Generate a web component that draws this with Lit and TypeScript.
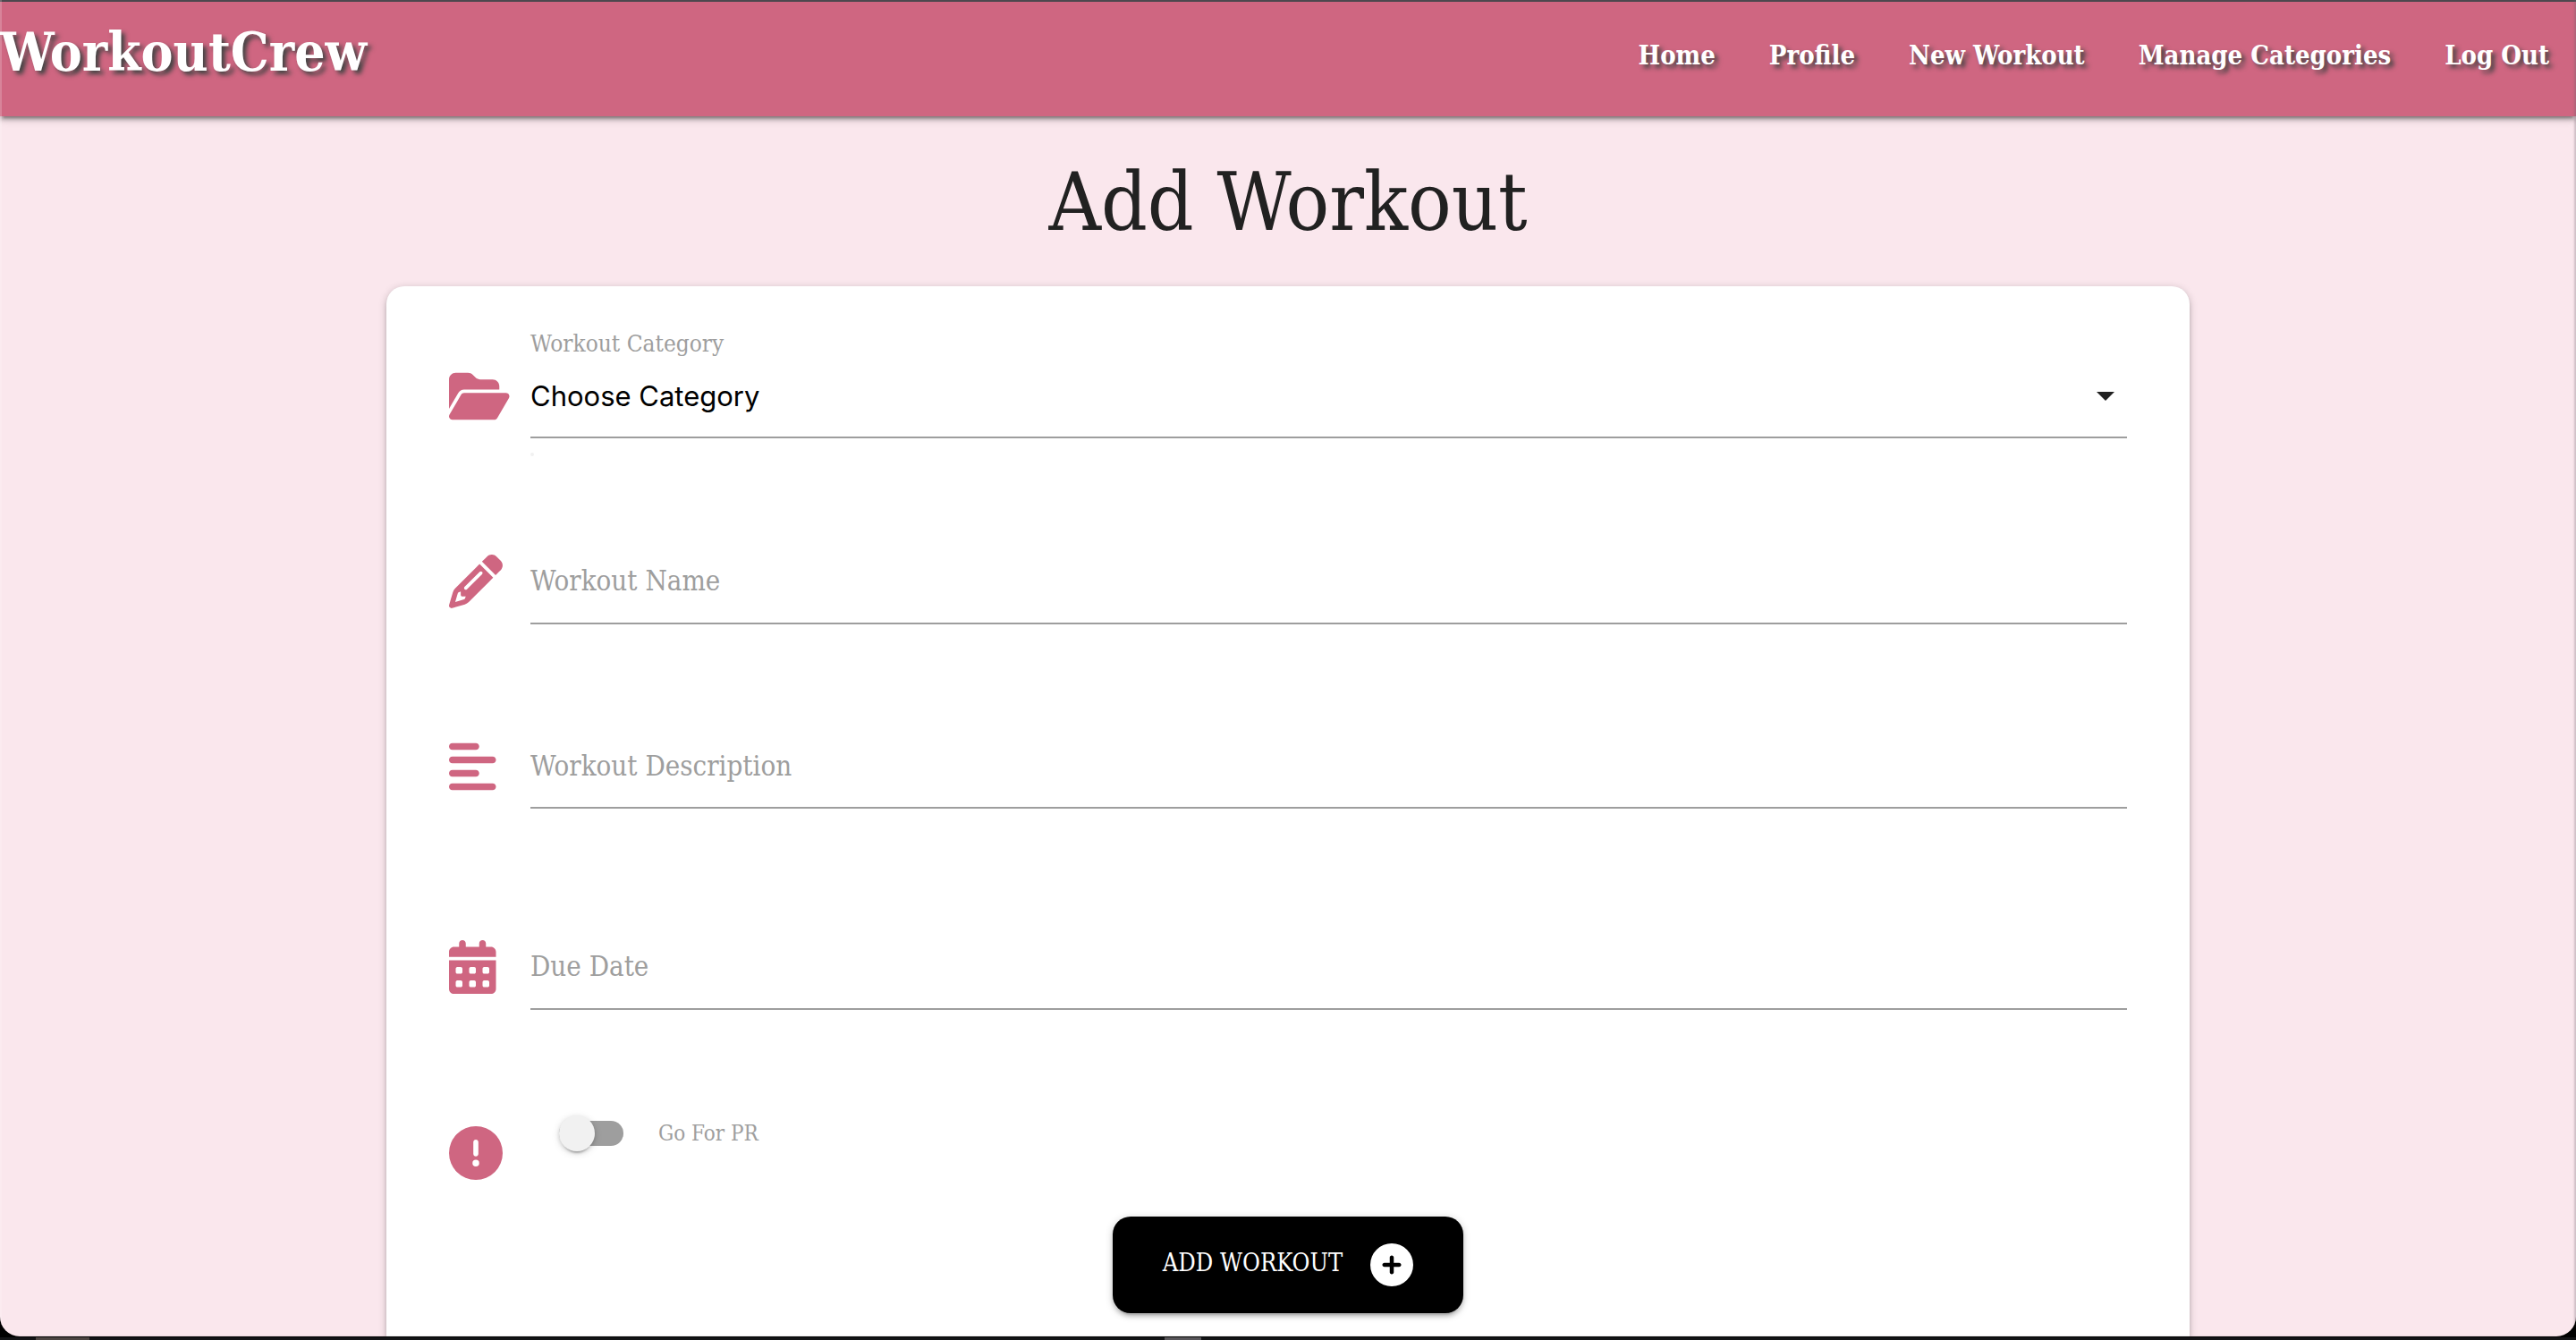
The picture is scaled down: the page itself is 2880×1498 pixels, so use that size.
import { LitElement, html, css, svg } from "lit";
import { customElement, property, state } from "lit/decorators.js";

const dot = (x: number, y: number) =>
  `M${x} ${y + 16}v32c0 8.8 7.2 16 16 16h32c8.8 0 16-7.2 16-16v-32c0-8.8-7.2-16-16-16h-32c-8.8 0-16 7.2-16 16z`;

const ICONS: Record<string, { width: number; path: string }> = {
  folder: {
    width: 576,
    path: "M88.7 223.8L0 375.8V96C0 60.7 28.7 32 64 32H181.5c17 0 33.3 6.7 45.3 18.7l26.5 26.5c12 12 28.3 18.7 45.3 18.7H416c35.3 0 64 28.7 64 64v32H144c-22.8 0-43.8 12.1-55.3 31.8zm27.6 16.1C122.1 230 132.6 224 144 224H544c11.5 0 22 6.1 27.7 16.1s5.7 22.2-.1 32.1l-112 192C453.9 474 443.4 480 432 480H32c-11.5 0-22-6.1-27.7-16.1s-5.7-22.2 .1-32.1l112-192z",
  },
  pencil: {
    width: 512,
    path: "M410.3 231l11.3-11.3-33.9-33.9-62.1-62.1L291.7 89.8l-11.3 11.3-22.6 22.6L58.6 322.9c-10.4 10.4-18 23.3-22.2 37.4L1 480.7c-2.5 8.4-.2 17.5 6.1 23.7s15.3 8.5 23.7 6.1l120.3-35.4c14.1-4.2 27-11.8 37.4-22.2L387.7 253.7 410.3 231zM160 399.4l-9.1 22.7c-4 3.1-8.5 5.4-13.3 6.9L59.4 452l23-78.1c1.4-4.9 3.8-9.4 6.9-13.3l22.7-9.1v32c0 8.8 7.2 16 16 16h32zM362.7 18.7L348.3 33.2 325.7 55.8 314.3 67.1l33.9 33.9 62.1 62.1 33.9 33.9 11.3-11.3 22.6-22.6 14.5-14.5c25-25 25-65.5 0-90.5L453.3 18.7c-25-25-65.5-25-90.5 0zm-47.4 168l-144 144c-6.2 6.2-16.4 6.2-22.6 0s-6.2-16.4 0-22.6l144-144c6.2-6.2 16.4-6.2 22.6 0s6.2 16.4 0 22.6z",
  },
  lines: {
    width: 448,
    path: "M288 64c0 17.7-14.3 32-32 32H32C14.3 96 0 81.7 0 64S14.3 32 32 32H256c17.7 0 32 14.3 32 32zm0 256c0 17.7-14.3 32-32 32H32c-17.7 0-32-14.3-32-32s14.3-32 32-32H256c17.7 0 32 14.3 32 32zM0 192c0-17.7 14.3-32 32-32H416c17.7 0 32 14.3 32 32s-14.3 32-32 32H32c-17.7 0-32-14.3-32-32zM448 448c0 17.7-14.3 32-32 32H32c-17.7 0-32-14.3-32-32s14.3-32 32-32H416c17.7 0 32 14.3 32 32z",
  },
  calendar: {
    width: 448,
    path:
      "M128 0c17.7 0 32 14.3 32 32V64H288V32c0-17.7 14.3-32 32-32s32 14.3 32 32V64h48c26.5 0 48 21.5 48 48v48H0V112C0 85.5 21.5 64 48 64H96V32c0-17.7 14.3-32 32-32zM0 192H448V464c0 26.5-21.5 48-48 48H48c-26.5 0-48-21.5-48-48V192z" +
      dot(64, 256) + dot(192, 256) + dot(320, 256) + dot(64, 384) + dot(192, 384) + dot(320, 384),
  },
  alert: {
    width: 512,
    path: "M256 512A256 256 0 1 0 256 0a256 256 0 1 0 0 512zm0-384c13.3 0 24 10.7 24 24V264c0 13.3-10.7 24-24 24s-24-10.7-24-24V152c0-13.3 10.7-24 24-24zM224 352a32 32 0 1 1 64 0 32 32 0 1 1 -64 0z",
  },
  plus: {
    width: 512,
    path: "M256 512A256 256 0 1 0 256 0a256 256 0 1 0 0 512zM232 344V280H168c-13.3 0-24-10.7-24-24s10.7-24 24-24h64V168c0-13.3 10.7-24 24-24s24 10.7 24 24v64h64c13.3 0 24 10.7 24 24s-10.7 24-24 24H280v64c0 13.3-10.7 24-24 24s-24-10.7-24-24z",
  },
};

@customElement("app-icon")
export class AppIcon extends LitElement {
  @property() name = "";

  static styles = css`
    :host {
      display: block;
      height: 60px;
    }
    .glyph {
      display: block;
      height: 100%;
      fill: currentColor;
    }
  `;

  render() {
    const icon = ICONS[this.name];
    return html`<svg class="glyph" viewBox="0 0 ${icon.width} 512" aria-hidden="true">
      ${svg`<path fill-rule="evenodd" d=${icon.path}></path>`}
    </svg>`;
  }
}

@customElement("app-root")
export class AppRoot extends LitElement {
  @state() private links = ["Home", "Profile", "New Workout", "Manage Categories", "Log Out"];

  static styles = css`
    :host {
      --rose: #cf6681;
      --blush: #fae7ed;
      --grey: #9e9e9e;
      --type: "DejaVu Serif Condensed", "DejaVu Serif", serif;
      display: flex;
      flex-direction: column;
      height: 100vh;
      background: #000;
      font-family: var(--type);
      font-size: 31px;
    }
    * {
      box-sizing: border-box;
    }
    .page {
      position: relative;
      flex: 1;
      min-height: 0;
      display: flex;
      flex-direction: column;
      overflow: hidden;
      background: var(--blush);
      border-radius: 0 0 22px 22px;
    }
    .page::after {
      content: "";
      position: absolute;
      inset: 0;
      pointer-events: none;
      box-shadow: inset 2px 0 rgba(255, 255, 255, 0.2), inset -2px 0 2px rgba(110, 100, 110, 0.3);
    }
    .desk {
      height: 4px;
      border-top: 1px solid #000;
      background: linear-gradient(#4c4542, #4c4542) 40px 0 / 60px 3px no-repeat,
        linear-gradient(#58565a, #58565a) 1302px 0 / 41px 3px no-repeat, #131416;
    }
    .bar {
      display: flex;
      justify-content: space-between;
      align-items: flex-start;
      height: 130px;
      flex: none;
      border-top: 2px solid #4b474e;
      background: var(--rose);
      box-shadow: 0 4px 4px rgba(0, 0, 0, 0.2), 0 6px 2px -4px rgba(0, 0, 0, 0.2),
        0 2px 10px rgba(0, 0, 0, 0.24);
    }
    .brand,
    .link {
      color: #fff;
      font-weight: 700;
      text-decoration: none;
      text-shadow: 4px 4px 5px #444;
      white-space: nowrap;
    }
    .brand {
      font-size: 60px;
      line-height: 112px;
    }
    .links {
      display: flex;
      gap: 60px;
      margin: 0;
      padding: 0 30px;
      list-style: none;
      font-size: 29px;
      line-height: 120px;
    }
    .title {
      flex: none;
      margin: 36px 0 34px;
      font-size: 90px;
      font-weight: 400;
      line-height: 120px;
      text-align: center;
      color: #212121;
    }
    .card {
      flex: 1 0 auto;
      width: 70%;
      margin: 0 auto;
      padding: 52px 70px 0;
      background: #fff;
      border-radius: 20px 20px 0 0;
      box-shadow: 0 4px 4px rgba(0, 0, 0, 0.14), 0 6px 2px -4px rgba(0, 0, 0, 0.12),
        0 2px 10px rgba(0, 0, 0, 0.2);
    }
    .row {
      display: grid;
      grid-template-columns: 91px 1fr;
      align-items: center;
      margin-bottom: 112px;
    }
    .row.wide {
      margin-bottom: 129px;
    }
    .row.last {
      align-items: start;
      margin-bottom: 41px;
    }
    .row app-icon {
      grid-column: 1;
      color: var(--rose);
    }
    .row.last app-icon {
      margin-top: 12px;
    }
    .row.date {
      margin-bottom: 118px;
    }
    .caption {
      grid-column: 2;
      font-size: 26px;
      line-height: 24px;
      color: var(--grey);
    }
    .field {
      grid-column: 2;
      display: grid;
      align-items: center;
      position: relative;
    }
    .label,
    .control,
    .arrow {
      grid-area: 1 / 1;
    }
    .label {
      padding-bottom: 2px;
      color: var(--grey);
      pointer-events: none;
      z-index: 1;
    }
    .control {
      display: block;
      width: 100%;
      height: 96px;
      margin: 0;
      padding: 0;
      border: 0;
      border-bottom: 2px solid var(--grey);
      border-radius: 0;
      outline: 0;
      background: transparent;
      color: #000;
      font: 31px Inter, "Liberation Sans", sans-serif;
      appearance: none;
      resize: none;
    }
    .control.short {
      height: 94px;
    }
    .arrow {
      justify-self: end;
      width: 20px;
      height: 10px;
      margin-right: 14px;
      fill: #212121;
      pointer-events: none;
    }
    .hint::after {
      content: "";
      position: absolute;
      top: 110px;
      left: 0;
      width: 4px;
      height: 4px;
      border-radius: 50%;
      background: #f1f1f1;
    }
    .switch {
      display: flex;
      align-items: center;
      gap: 39px;
      padding-left: 32px;
      font-size: 24px;
      line-height: 40px;
      color: var(--grey);
    }
    .toggle {
      position: relative;
      width: 72px;
      height: 40px;
      margin: 0;
      appearance: none;
    }
    .toggle::before {
      content: "";
      position: absolute;
      inset: 6px 0;
      border-radius: 14px;
      background: var(--grey);
    }
    .toggle::after {
      content: "";
      position: absolute;
      inset: 0 32px 0 0;
      border-radius: 50%;
      background: #f1f1f1;
      box-shadow: 0 6px 2px -4px rgba(0, 0, 0, 0.2), 0 2px 4px rgba(0, 0, 0, 0.14),
        0 2px 10px rgba(0, 0, 0, 0.12);
    }
    .toggle:checked::after {
      inset: 0 0 0 32px;
      background: var(--rose);
    }
    .submit {
      display: flex;
      align-items: center;
      gap: 31px;
      height: 108px;
      margin: 0 auto;
      padding: 0 56px;
      border: 0;
      border-radius: 20px;
      background: #000;
      color: #fff;
      font: 27px var(--type);
      text-transform: uppercase;
      box-shadow: 0 4px 4px rgba(0, 0, 0, 0.14), 0 6px 2px -4px rgba(0, 0, 0, 0.12),
        0 2px 10px rgba(0, 0, 0, 0.2);
    }
    .submit app-icon {
      height: 48px;
    }
    .text {
      padding-bottom: 6px;
    }
  `;

  render() {
    return html`
      <div class="page">
        <nav class="bar">
          <a class="brand" href="#">WorkoutCrew</a>
          <ul class="links">
            ${this.links.map((text) => html`<li><a class="link" href="#">${text}</a></li>`)}
          </ul>
        </nav>
        <h1 class="title">Add Workout</h1>
        <form class="card">
          <div class="row">
            <label class="caption" for="category">Workout Category</label>
            <app-icon name="folder"></app-icon>
            <div class="field hint">
              <select class="control short" id="category">
                <option>Choose Category</option>
              </select>
              <svg class="arrow" viewBox="0 0 20 10" aria-hidden="true"><path d="M0 0h20L10 10z"></path></svg>
            </div>
          </div>
          <div class="row">
            <app-icon name="pencil"></app-icon>
            <div class="field">
              <label class="label" for="name">Workout Name</label>
              <input class="control" id="name" type="text" />
            </div>
          </div>
          <div class="row wide">
            <app-icon name="lines"></app-icon>
            <div class="field">
              <label class="label" for="description">Workout Description</label>
              <textarea class="control short" id="description"></textarea>
            </div>
          </div>
          <div class="row date">
            <app-icon name="calendar"></app-icon>
            <div class="field">
              <label class="label" for="due">Due Date</label>
              <input class="control" id="due" type="text" />
            </div>
          </div>
          <div class="row last">
            <app-icon name="alert"></app-icon>
            <label class="switch">
              <input class="toggle" type="checkbox" role="switch" />
              <span>Go For PR</span>
            </label>
          </div>
          <button class="submit" type="button">
            <span class="text">Add Workout</span>
            <app-icon name="plus"></app-icon>
          </button>
        </form>
      </div>
      <div class="desk"></div>
    `;
  }
}
